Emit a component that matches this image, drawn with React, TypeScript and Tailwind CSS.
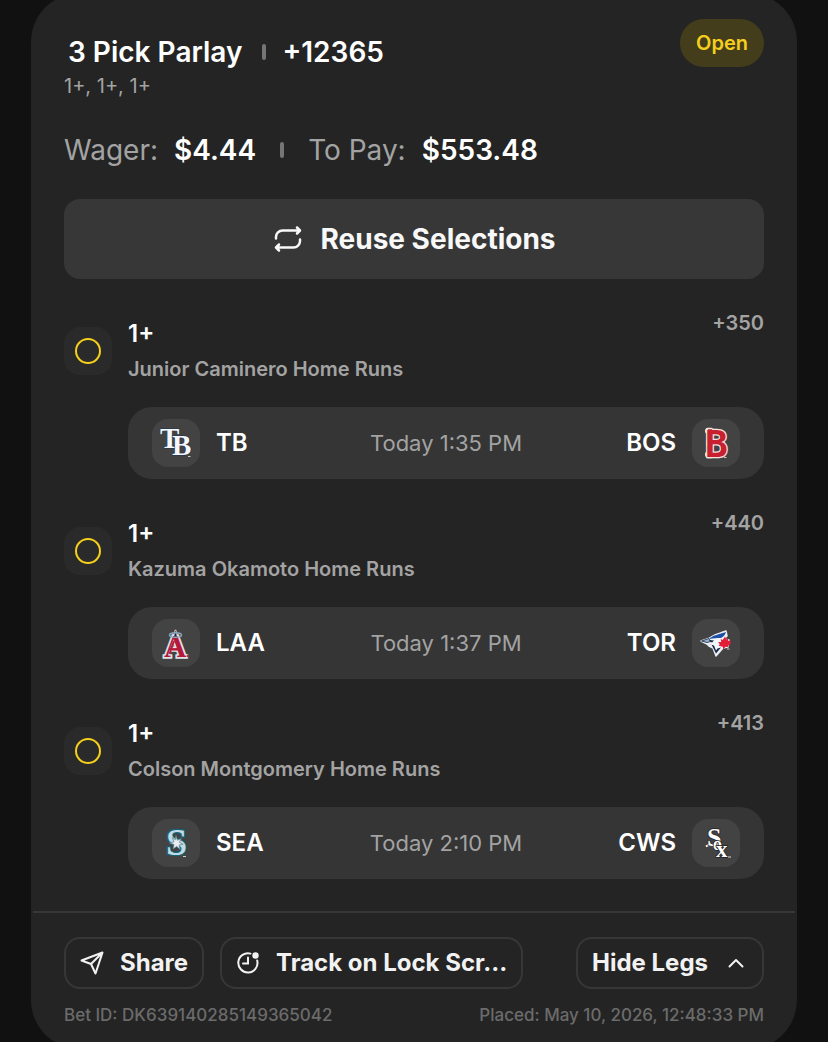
import React, { useState } from "react"

interface Leg {
	pick: string
	market: string
	odds: string
	time: string
	away: string
	home: string
}

const legs: Leg[] = [
	{ pick: "1+", market: "Junior Caminero Home Runs", odds: "+350", time: "Today 1:35 PM", away: "TB", home: "BOS" },
	{ pick: "1+", market: "Kazuma Okamoto Home Runs", odds: "+440", time: "Today 1:37 PM", away: "LAA", home: "TOR" },
	{ pick: "1+", market: "Colson Montgomery Home Runs", odds: "+413", time: "Today 2:10 PM", away: "SEA", home: "CWS" },
]

const logos: Record<string, React.ReactNode> = {
	TB: (
		<g>
			<text fontFamily="Liberation Serif, serif" fontSize="29" fontWeight="700" fill="#f4f7fb" stroke="#1f3350" strokeWidth="1" paintOrder="stroke">
				<tspan x="8" y="29">T</tspan>
				<tspan x="20" y="36">B</tspan>
			</text>
			<path d="M36 37.500h2.500" stroke="#c9ced6" />
		</g>
	),
	BOS: (
		<g>
			<g fill="#c8202f" stroke="#f3e3e0" strokeWidth="2.500" paintOrder="stroke" strokeLinejoin="round">
				<circle cx="16" cy="12" r="1.800" />
				<circle cx="16" cy="35.500" r="1.800" />
				<path d="M15.500 22.500h4v3h-4zM15.500 10h4v3h-4zM15.500 35h4v3h-4z" />
				<text x="13" y="38" fontFamily="DejaVu Sans Mono, monospace" fontSize="38" fontWeight="700">B</text>
			</g>
			<path d="M16 11.500h4M16 36.500h4M16.500 24h4" stroke="#c8202f" strokeWidth="2.500" />
			<path d="M32 38.500h2.500" stroke="#c9c9c9" />
		</g>
	),
	LAA: (
		<g fontFamily="Liberation Serif, serif" fontSize="31" fontWeight="700">
			<g fill="#b5193c" stroke="#dfe3e8" strokeWidth="3.500" paintOrder="stroke">
				<path d="M22 18l1.500-7 1.500 7z" strokeWidth="1.500" />
				<text x="12" y="38">A</text>
			</g>
			<path d="M22 18l1.500-6 1.500 6z" fill="#16233c" />
			<ellipse cx="23.500" cy="16" rx="6" ry="2.300" fill="none" stroke="#8ba9c2" strokeWidth="1.500" />
			<path d="M20 30.500h6M17.500 35l4.500-13M23 20l6 15" stroke="#b5193c" strokeWidth="2" />
			<circle cx="35.500" cy="37" r="1" fill="#b5193c" />
		</g>
	),
	TOR: (
		<g strokeLinejoin="round">
			<path d="M9 22l9-3c4-4 9-4 16-7l1 5-3 3 5 1-1 7-5 1-7 8-3-8-4-2-2-2z" fill="#f4f6fa" stroke="#e8edf4" strokeWidth="1.500" />
			<path d="M17 20c4-4 8-4 17-7-1 3-2 4-5 6-4 0-7 0-12 1z" fill="#1d4fa3" />
			<path d="M9.500 22l7.500-2.500 2 3-4 1z" fill="#9db1c9" stroke="#152748" strokeWidth=".8" />
			<path d="M15.500 24.500l4 1 2.500 5 2 4 5-6-3.500 1-1.500 2-2-5z" fill="#152748" />
			<path d="M17 21l5 .5-2 2-2-1z" fill="#152748" />
			<path d="M33 17.500l1.500 3 1.500-1 .2 2.500 3-.7-1 2 1 1-3 2.500.2 1.200-3-.3-2 2.500-.7-2.500-4-1 1-1.500-1.500-2.300 3 .2-.5-3.200 2 1z" fill="#e21d38" />
			<path d="M35 30h2.500" stroke="#c9c9c9" />
		</g>
	),
	SEA: (
		<g>
			<text x="14" y="36" fontFamily="Liberation Serif, serif" fontSize="38" fontWeight="700" fill="#c3d9e3" stroke="#126477" strokeWidth="2.500" paintOrder="stroke">S</text>
			<path d="M24 16.500l1.300 4.700 4-1.700-2 3.800 3.700 2-4 .7 1.300 4.500-3.600-3-3.700 2.500 1-4.500-4.500-1.500 4.500-1.200-1.700-4 3 2z" fill="#e9eef1" stroke="#587d8b" strokeWidth=".7" />
			<path d="M31 37.500h3" stroke="#c9ced6" />
		</g>
	),
	CWS: (
		<g>
			<path d="M14 27.500c3-2.500 6-1.500 9 1" fill="none" stroke="#fff" strokeWidth="2" />
			<text fontFamily="Liberation Serif, serif" fontWeight="700" fill="#fff" stroke="#222" strokeWidth="1.500" paintOrder="stroke">
				<tspan x="15" y="27" fontSize="26">S</tspan>
				<tspan x="21" y="31" fontSize="18">o</tspan>
				<tspan x="24" y="38" fontSize="23">x</tspan>
			</text>
			<path d="M36 38h3" stroke="#d5d5d5" />
		</g>
	),
}

const TeamLogo = ({ team }: { team: string }) => (
	<span className="size-12 shrink-0 rounded-2xl bg-[#434343]">
		<svg viewBox="0 0 48 48" className="size-12" aria-hidden="true">
			{logos[team]}
		</svg>
	</span>
)

const Separator = () => <span className="h-4 w-1 rounded-sm bg-[#757575]" />

const LegRow = ({ leg }: { leg: Leg }) => (
	<li className="flex gap-4">
		<span className="mt-2 flex size-12 shrink-0 items-center justify-center rounded-2xl bg-[#2a2a2a]">
			<span className="size-[26px] rounded-full border-2 border-[#f5cf1b]" />
		</span>
		<div className="min-w-0 flex-1">
			<div className="flex items-start justify-between">
				<div>
					<h2 className="text-2xl leading-[30px] font-semibold text-white">{leg.pick}</h2>
					<p className="mt-1 text-xl leading-8 font-semibold text-[#a3a3a3]">{leg.market}</p>
				</div>
				<span className="-mt-3 text-xl leading-8 font-semibold text-[#a3a3a3]">{leg.odds}</span>
			</div>
			<div className="mt-[22px] flex h-[72px] items-center rounded-3xl bg-[#353535] px-6">
				<div className="flex flex-1 items-center gap-4 text-2xl font-semibold text-white">
					<TeamLogo team={leg.away} />
					{leg.away}
				</div>
				<span className="text-[22px] text-[#a3a3a3]">{leg.time}</span>
				<div className="flex flex-1 items-center justify-end gap-4 text-2xl font-semibold text-white">
					{leg.home}
					<TeamLogo team={leg.home} />
				</div>
			</div>
		</div>
	</li>
)

const App = () => {
	const [showLegs, setShowLegs] = useState(true)

	return (
		<main className="overflow-hidden bg-[#111111] px-8 font-['Inter',sans-serif]">
			<article className="-my-1.5 rounded-[48px] bg-[#242424] ring-1 ring-[#242424]">
				<div className="px-8 pt-[25px] pb-8">
					<header className="flex items-start justify-between">
						<div className="pt-[15px]">
							<h1 className="flex items-center gap-4 pl-1 text-[28px] leading-9 font-semibold text-white">
								3 Pick Parlay
								<span className="flex pl-1">
									<Separator />
								</span>
								+12365
							</h1>
							<p className="text-xl leading-8 text-[#a3a3a3]">1+, 1+, 1+</p>
						</div>
						<span className="rounded-full bg-[#443d1c] px-4 py-2 text-xl leading-8 font-semibold text-[#f5cf1b]">Open</span>
					</header>

					<div className="mt-7 flex items-center gap-4 text-[28px] leading-10 text-[#a3a3a3]">
						<span>Wager:</span>
						<span className="font-semibold text-white">$4.44</span>
						<span className="flex px-2">
							<Separator />
						</span>
						<span>To Pay:</span>
						<span className="font-semibold text-white">$553.48</span>
					</div>

					<button type="button" className="mt-[29px] flex h-20 w-full items-center justify-center gap-4 rounded-2xl bg-[#373737] text-[28px] font-bold text-[#f8f8f8]">
						<svg viewBox="0 0 32 32" className="size-8" fill="none" stroke="currentColor" strokeWidth="2.500" strokeLinecap="round" strokeLinejoin="round" aria-hidden="true">
							<path d="M4 15.500v-1.500a6.500 6.500 0 0 1 6.500-6.500h17M25 4.500l3 3-3 3M28 16.500v1.500a6.500 6.500 0 0 1-6.500 6.500h-17M7 21.500l-3 3 3 3" />
						</svg>
						Reuse Selections
					</button>

					{showLegs && (
						<ul className="mt-10 flex flex-col gap-10">
							{legs.map((leg) => (
								<LegRow key={leg.market} leg={leg} />
							))}
						</ul>
					)}
				</div>

				<footer className="mx-px border-t-2 border-[#373737] px-[31px] pt-6 pb-[21px]">
					<div className="flex items-center gap-4 text-2xl font-bold text-[#f2f2f2]">
						<button type="button" className="flex h-[52px] items-center gap-4 rounded-2xl border-2 border-[#373737] px-3.5">
							<svg viewBox="0 0 24 24" className="size-6" fill="none" stroke="currentColor" strokeWidth="2" strokeLinejoin="round" aria-hidden="true">
								<path d="M1.500 9.500L22.500 1.500l-7 21-4.500-9.500zM11 13L22.500 1.500" />
							</svg>
							Share
						</button>
						<button type="button" className="flex h-[52px] items-center gap-4 rounded-2xl border-2 border-[#373737] px-3.5 whitespace-nowrap">
							<svg viewBox="0 0 24 24" className="size-6" fill="none" stroke="currentColor" strokeWidth="2" strokeLinecap="round" aria-hidden="true">
								<path d="M14.500 2.600A9.600 9.600 0 1 0 21.200 9.500M12 6.500v6H7" />
								<circle cx="19.500" cy="4.500" r="3.200" fill="currentColor" stroke="none" />
							</svg>
							Track on Lock Scr...
						</button>
						<button type="button" aria-expanded={showLegs} onClick={() => setShowLegs(!showLegs)} className="ml-auto flex h-[52px] items-center gap-4 rounded-2xl border-2 border-[#373737] px-3.5 whitespace-nowrap">
							Hide Legs
							<svg viewBox="0 0 24 24" className="size-6" fill="none" stroke="currentColor" strokeWidth="2" strokeLinecap="round" strokeLinejoin="round" aria-hidden="true">
								<path d="M5.500 15.500L12 9l6.500 6.500" />
							</svg>
						</button>
					</div>
					<div className="mt-3.5 flex justify-between text-[17px] leading-6 font-medium text-[#6b6b6b]">
						<span>Bet ID: DK639140285149365042</span>
						<span>Placed: May 10, 2026, 12:48:33 PM</span>
					</div>
				</footer>
			</article>
		</main>
	)
}

export default App
